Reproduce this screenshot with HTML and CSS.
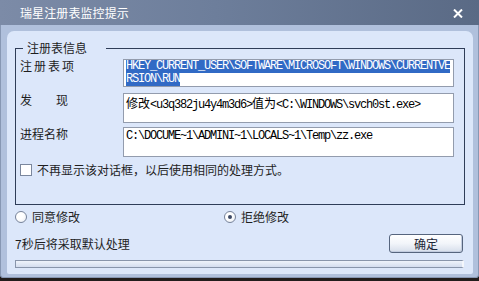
FILE: index.html
```html
<!DOCTYPE html>
<html lang="zh-CN">
<head>
<meta charset="utf-8">
<title>瑞星注册表监控提示</title>
<link rel="stylesheet" href="styles.css">
</head>
<body>
<div class="window">
  <div class="titlebar">
    <span class="title">瑞星注册表监控提示</span>
    <svg class="close" width="10" height="9" viewBox="0 0 10 9"><path d="M1 0.5 L9 8.5 M9 0.5 L1 8.5" stroke="#fff" stroke-width="2" fill="none"/></svg>
  </div>
  <div class="frame">
    <div class="panel">
      <fieldset class="group">
        <legend class="legend">注册表信息</legend>
        <div class="row row1">
          <div class="label wide">注册表项</div>
          <div class="box box1">
            <span class="sel">HKEY_CURRENT_USER\SOFTWARE\MICROSOFT\WINDOWS\CURRENTVE</span><br><span class="sel">RSION\RUN</span>
          </div>
        </div>
        <div class="row row2">
          <div class="label split"><span>发</span><span>现</span></div>
          <div class="box"><span class="cjk">修改</span>&lt;u3q382ju4y4m3d6&gt;<span class="cjk">值为</span>&lt;C:\WINDOWS\svch0st.exe&gt;</div>
        </div>
        <div class="row row3">
          <div class="label">进程名称</div>
          <div class="box">C:\DOCUME~1\ADMINI~1\LOCALS~1\Temp\zz.exe</div>
        </div>
        <div class="check-row">
          <span class="checkbox"></span>
          <span>不再显示该对话框，以后使用相同的处理方式。</span>
        </div>
      </fieldset>
      <div class="radios">
        <div class="radio-item"><span class="radio"></span><span>同意修改</span></div>
        <div class="radio-item"><span class="radio on"></span><span>拒绝修改</span></div>
      </div>
      <div class="footer">
        <span class="countdown">7秒后将采取默认处理</span>
        <button class="btn">确定</button>
      </div>
      <div class="progress"></div>
    </div>
  </div>
</div>
</body>
</html>
```
FILE: styles.css
```css
html, body {
  margin: 0;
  padding: 0;
}
body {
  width: 479px;
  height: 281px;
  overflow: hidden;
  background: #221d1c;
  font-family: "Noto Sans CJK SC", sans-serif;
  font-size: 12px;
  color: #1e1e1e;
}
.window {
  width: 479px;
  height: 278px;
  display: flex;
  flex-direction: column;
  background: #b0c0dc;
  box-shadow: inset 1px 0 0 #8797b3, inset -1px 0 0 #8797b3, inset 0 -1px 0 #8797b3;
  border-radius: 0 0 4px 4px;
}
.titlebar {
  height: 25px;
  flex: none;
  display: flex;
  align-items: center;
  justify-content: space-between;
  padding: 0 16px 0 20px;
  background: linear-gradient(to right, #7c8ba7 0%, #6d7e9b 45%, #5a6a85 100%);
  color: #fff;
}
.title {
  font-size: 12px;
  line-height: 14px;
  letter-spacing: 0.1px;
}
.close {
  display: block;
  margin-top: 1px;
}
.frame {
  flex: 1;
  display: flex;
  padding: 6px 6px 5px 7px;
}
.panel {
  flex: 1;
  display: flex;
  flex-direction: column;
  background: #dce7fa;
  border-radius: 7px 7px 2px 2px;
  padding: 10px 8px 6px 8px;
}
.group {
  margin: 0;
  border: 1px solid #2f3d58;
  padding: 3px 10px 27px 4px;
  min-width: 0;
}
.legend {
  padding: 0 19px 0 4px;
  margin-left: 3px;
  line-height: 14px;
  font-size: 12px;
}
.row {
  display: flex;
  align-items: flex-start;
}
.row1 { margin-top: 1px; }
.row2 { margin-top: 6px; }
.row3 { margin-top: 4px; }
.label {
  width: 103px;
  flex: none;
  line-height: 14px;
  padding-top: 0;
}
.label.wide { letter-spacing: 2px; }
.label.split {
  display: flex;
  justify-content: space-between;
  width: 48px;
  margin-right: 55px;
}
.box {
  flex: 1;
  height: 28px;
  box-sizing: border-box;
  background: #fff;
  border: 1px solid #939cad;
  padding: 1px 2px 0 2px;
  font-family: "Liberation Mono", monospace;
  font-size: 12px;
  letter-spacing: -1.2px;
  line-height: 13px;
  color: #000;
  white-space: nowrap;
  overflow: hidden;
}
.row2 .box, .row3 .box {
  height: 30px;
  padding-top: 2px;
}
.box1 {
  padding-top: 0;
}
.sel {
  display: inline-block;
  background: #316ac5;
  color: #fff;
  line-height: 13px;
  height: 13px;
  vertical-align: top;
}
.cjk {
  font-family: "Noto Sans CJK SC", sans-serif;
  font-size: 12px;
  letter-spacing: 0;
}
.check-row {
  display: flex;
  align-items: center;
  gap: 5px;
  margin-top: 6px;
  height: 14px;
  line-height: 14px;
}
.checkbox {
  width: 10px;
  height: 10px;
  flex: none;
  background: #fff;
  border: 1px solid #7b879d;
}
.radios {
  display: flex;
  margin-top: 5px;
  height: 14px;
  line-height: 14px;
}
.radio-item {
  display: flex;
  align-items: center;
  gap: 5px;
  width: 209px;
}
.radio {
  width: 10px;
  height: 10px;
  flex: none;
  border-radius: 50%;
  border: 1px solid #77839a;
  background: radial-gradient(circle at 35% 35%, #ffffff 40%, #e4e9f2 100%);
  position: relative;
}
.radio.on::after {
  content: "";
  position: absolute;
  left: 3px;
  top: 3px;
  width: 4px;
  height: 4px;
  border-radius: 50%;
  background: #3b4865;
}
.footer {
  display: flex;
  justify-content: space-between;
  align-items: center;
  margin-top: 10px;
  margin-right: 2px;
  height: 19px;
}
.countdown {
  line-height: 14px;
  margin-top: 1px;
}
.btn {
  width: 74px;
  height: 19px;
  padding: 0;
  margin: 0;
  border: 1px solid #56657e;
  border-radius: 3px;
  background: linear-gradient(#ffffff 0%, #f2f5fa 50%, #d6deeb 100%);
  box-shadow: inset -1px -1px 0 #c3cde0;
  font-family: "Noto Sans CJK SC", sans-serif;
  font-size: 12px;
  line-height: 16px;
  color: #1c2536;
}
.progress {
  margin-top: 7px;
  margin-right: 1px;
  height: 8px;
  box-sizing: border-box;
  border: 1px solid #8895ab;
  border-right: 2px solid #f4f7fc;
  background: linear-gradient(#eef3fb, #d3ddef);
}
```
